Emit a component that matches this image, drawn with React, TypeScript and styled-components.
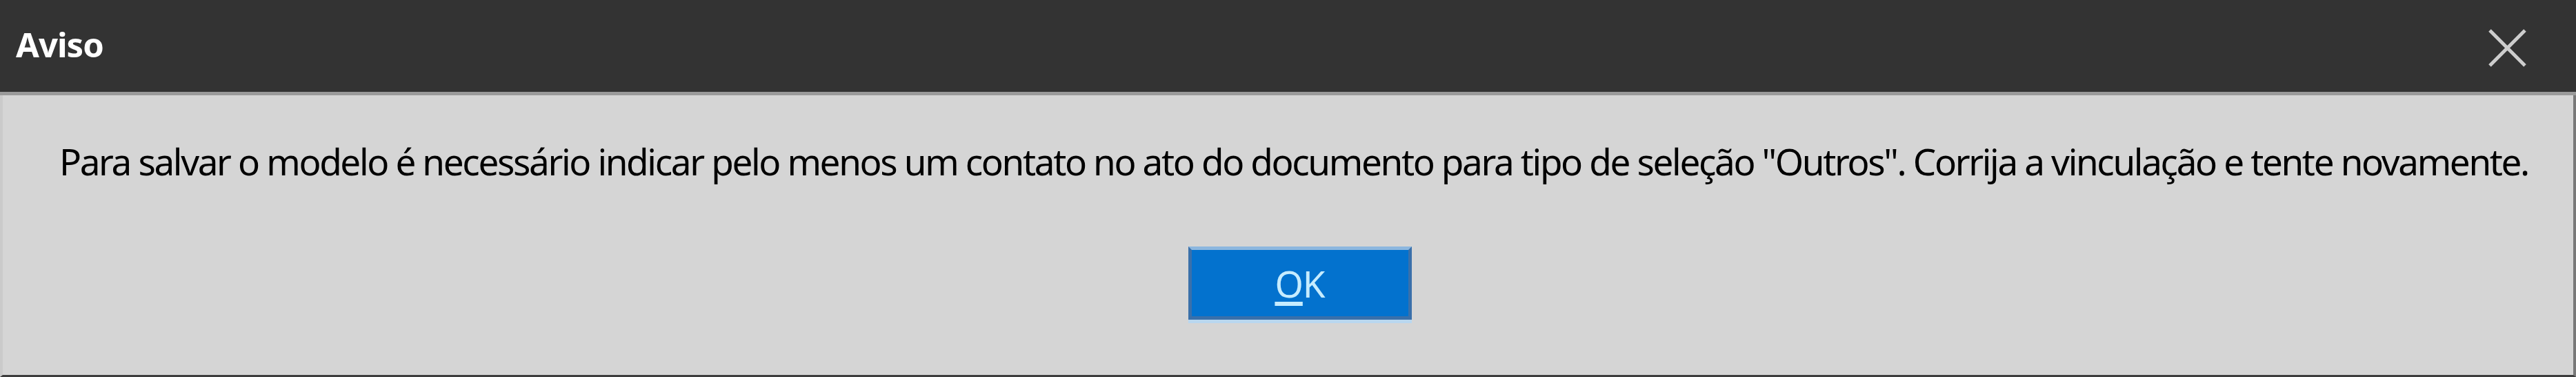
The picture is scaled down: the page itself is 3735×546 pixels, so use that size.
import styled, { createGlobalStyle } from "styled-components";

const GlobalStyle = createGlobalStyle`
  html, body {
    margin: 0;
    padding: 0;
    background: #d5d5d5;
  }
  #root {
    width: 100vw;
    height: 100vh;
  }
`;

export const DialogWindow = styled.div`
  display: flex;
  flex-direction: column;
  width: 100%;
  height: 100%;
  font-family: "Noto Sans", "Open Sans", sans-serif;
`;

export const TitleBar = styled.div`
  display: flex;
  align-items: center;
  justify-content: space-between;
  height: 133px;
  padding: 0 72px 0 23px;
  background: #333333;
  border-bottom: 5px solid #9a9a9a;
`;

export const Title = styled.span`
  color: #ffffff;
  font-size: 49px;
  font-weight: 700;
  line-height: 1;
  letter-spacing: -1px;
  margin-top: -4px;
`;

export const CloseButton = styled.button`
  display: flex;
  align-items: center;
  justify-content: center;
  width: 55px;
  height: 55px;
  padding: 0;
  border: 0;
  background: transparent;
  margin-top: 5px;
`;

export const Body = styled.div`
  flex: 1;
  display: flex;
  flex-direction: column;
  background: #d5d5d5;
  border-left: 4px solid #cacaca;
  border-right: 4px solid #787878;
  border-bottom: 3px solid #3c3c3c;
  padding: 58px 0 0 82px;
`;

export const Message = styled.p`
  margin: 0;
  color: #000000;
  font-size: 53px;
  line-height: 75px;
  letter-spacing: -2.35px;
  white-space: nowrap;
`;

export const BtnRow = styled.div`
  display: flex;
  justify-content: center;
  margin-top: 86px;
  margin-left: -48px;
`;

export const OkButton = styled.button`
  width: 324px;
  height: 106px;
  padding: 0;
  background: #0372ce;
  border: 5px solid #3a70aa;
  border-top-color: #8cb7df;
  box-shadow: 0 5px 0 #b9d7ef;
  color: #c6ecff;
  font-family: inherit;
  font-size: 53px;
  line-height: 1;
  letter-spacing: -1px;
  u {
    text-decoration-thickness: 6px;
    text-underline-offset: 6px;
  }
`;

function App() {
  return (
    <>
      <GlobalStyle />
      <DialogWindow>
        <TitleBar>
          <Title>Aviso</Title>
          <CloseButton aria-label="Fechar">
            <svg width="55" height="55" viewBox="0 0 55 55">
              <path
                d="M2 2 L53 53 M53 2 L2 53"
                stroke="#cdcdcd"
                strokeWidth="5"
                fill="none"
              />
            </svg>
          </CloseButton>
        </TitleBar>
        <Body>
          <Message>
            Para salvar o modelo é necessário indicar pelo menos um contato no
            ato do documento para tipo de seleção "Outros". Corrija a
            vinculação e tente novamente.
          </Message>
          <BtnRow>
            <OkButton>
              <u>O</u>K
            </OkButton>
          </BtnRow>
        </Body>
      </DialogWindow>
    </>
  );
}

export default App;
